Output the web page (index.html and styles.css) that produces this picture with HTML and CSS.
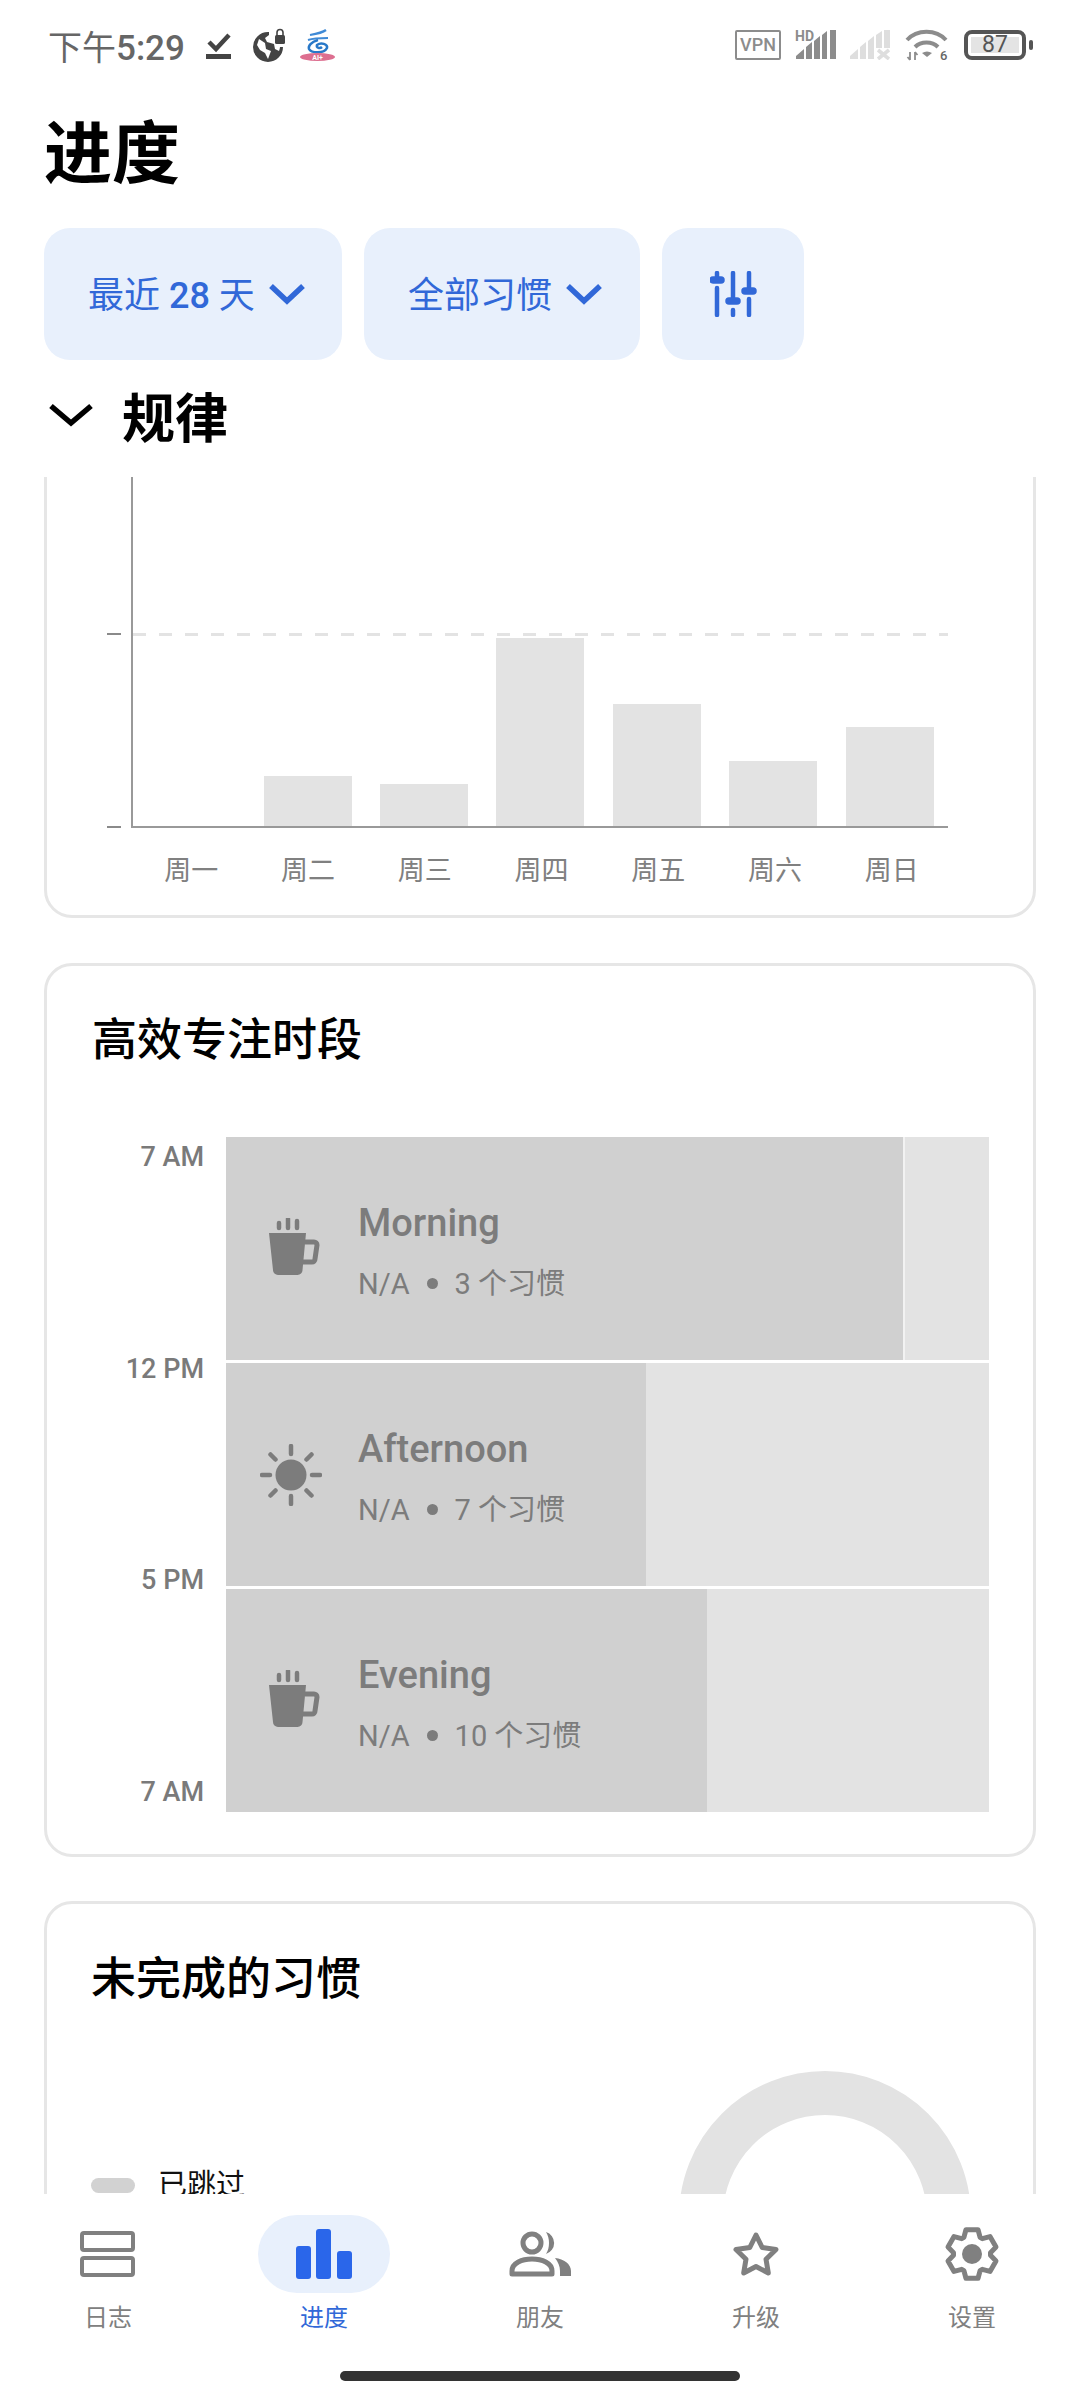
FILE: index.html
```html
<!DOCTYPE html>
<html>
<head>
	<meta charset="utf-8" />
	<title>进度</title>
	<link rel="stylesheet" href="styles.css">
</head>
<body>
<div class="page">
	<div class="statusbar">
		<div class="status-left">
			<span class="clock">下午<b>5:29</b></span>
			<svg class="ic-done" viewBox="0 0 25 32"><path d="M3 13l7 7L23 6" fill="none" stroke="#444" stroke-width="4.5"/><rect x="0" y="25" width="25" height="5" fill="#444"/></svg>
			<svg class="ic-globe" viewBox="0 0 32 34"><path d="M15 4A15 15 0 1 0 30 19h-3a12 12 0 0 1-1 4l-4-2-1-5-7-2-2-4 4-3V4z" fill="#444"/><path d="M6 11l6 4 1 6 5 2-3 8-3-6-5-3-3-5z" fill="#fff"/><rect x="22" y="7" width="10" height="9" rx="1.500" fill="#444"/><path d="M24 8V4.500a3 3 0 0 1 6 0V8" fill="none" stroke="#444" stroke-width="1.600"/></svg>
			<svg class="ic-app" viewBox="0 0 35 32"><path d="M10 6C16 5 22 4 26 1M8 11C14 9 22 9 28 9" fill="none" stroke="#3f8ad6" stroke-width="2.200"/><path d="M18 11C11 13 8 17 9 20C11 24 24 25 27 19C28 15 21 13 17 16C16 19 20 20 22 18" fill="none" stroke="#2878c8" stroke-width="2.500"/><ellipse cx="17.500" cy="28" rx="17.500" ry="4" fill="#dd6f90"/><text x="17.500" y="30.500" class="app-tag">AI+</text></svg>
		</div>
		<div class="status-right">
			<span class="vpn">VPN</span>
			<svg class="ic-hd" viewBox="0 -4 41 38"><text x="0" y="11" class="hd-tag">HD</text><path d="M1 29V26L9 19V29zM11 29V17L17 12V29zM19 29V11L25 6V29zM27 29V5L32 1V29zM35 29V0H41V29z" fill="#8c8c8c"/></svg>
			<svg class="ic-sim" viewBox="0 0 40 30"><path d="M0 29V26L8 19V29zM10 29V17L16 12V29zM18 29V11L24 6V29zM26 18V5L32 1V18zM34 18V0H40V18z" fill="#dedede"/><path d="M28 20L39 29M39 20L28 29" stroke="#dedede" stroke-width="3.600"/></svg>
			<svg class="ic-wifi" viewBox="0 -4 43 40"><path d="M2 11C12 0 31 0 41 11M10 18C16 12 27 12 33 18" fill="none" stroke="#8c8c8c" stroke-width="4"/><path d="M17 24Q22 21 27 24L22 28z" fill="#8c8c8c"/><path d="M5 23V31M2.500 28L5 31M10 23V31M10 23L12.500 26" stroke="#8c8c8c" stroke-width="1.800" fill="none"/><text x="35" y="31" class="wifi-tag">6</text></svg>
			<div class="battery"><span class="level">87</span></div>
		</div>
	</div>

	<h1 class="title">进度</h1>

	<div class="chips">
		<div class="chip chip-range"><span>最近 <b>28</b> 天</span><svg class="chevron" viewBox="0 0 38 22"><path d="M3 3l16 15L35 3" fill="none" stroke="#3168d8" stroke-width="5.500"/></svg></div>
		<div class="chip chip-habits"><span>全部习惯</span><svg class="chevron" viewBox="0 0 38 22"><path d="M3 3l16 15L35 3" fill="none" stroke="#3168d8" stroke-width="5.500"/></svg></div>
		<div class="chip chip-icon">
			<svg viewBox="0 0 47 46" width="47" height="46"><g stroke="#3168d8" stroke-width="4.500" stroke-linecap="round" fill="none"><path d="M7 2V6M7 17V44M23 2V28M23 39V44M39 2V17M39 28V44"/><path d="M3 9H11M19 30H27M35 20H43" stroke-width="7.500"/></g></svg>
		</div>
	</div>

	<div class="section-head">
		<svg class="section-arrow" viewBox="0 0 46 24"><path d="M3 3l20 17L43 3" fill="none" stroke="#000" stroke-width="5.500"/></svg>
		<h2>规律</h2>
	</div>

	<div class="scroller">
		<div class="card card-week">
			<div class="plot">
				<div class="goal"></div>
				<div class="bar-col"><div class="bar" style="height:0"></div></div>
				<div class="bar-col"><div class="bar" style="height:50px"></div></div>
				<div class="bar-col"><div class="bar" style="height:42px"></div></div>
				<div class="bar-col"><div class="bar" style="height:188px"></div></div>
				<div class="bar-col"><div class="bar" style="height:122px"></div></div>
				<div class="bar-col"><div class="bar" style="height:65px"></div></div>
				<div class="bar-col"><div class="bar" style="height:99px"></div></div>
			</div>
			<div class="days">
				<span>周一</span><span>周二</span><span>周三</span><span>周四</span><span>周五</span><span>周六</span><span>周日</span>
			</div>
		</div>

		<div class="card card-focus">
			<h3>高效专注时段</h3>
			<div class="timeline">
				<div class="hours">
					<span>7 AM</span><span>12 PM</span><span>5 PM</span><span>7 AM</span>
				</div>
				<div class="blocks">
					<div class="block">
						<div class="fill fill-edge" style="width:679px">
							<svg class="period-icon" viewBox="0 0 62 62"><use href="#mug"/></svg>
							<div class="period"><div class="period-name">Morning</div><div class="period-sub">N/A<i></i>3 个习惯</div></div>
						</div>
					</div>
					<div class="block">
						<div class="fill" style="width:420px">
							<svg class="period-icon" viewBox="0 0 62 62"><circle cx="31" cy="31" r="15.500" fill="#7c7c7c"/><path d="M31 2v8M31 52v8M2 31h8M52 31h8M10.500 10.500l5 5M46.500 46.500l5 5M51.500 10.500l-5 5M15.500 46.500l-5 5" stroke="#7c7c7c" stroke-width="4.500" stroke-linecap="round"/></svg>
							<div class="period"><div class="period-name">Afternoon</div><div class="period-sub">N/A<i></i>7 个习惯</div></div>
						</div>
					</div>
					<div class="block">
						<div class="fill" style="width:481px">
							<svg class="period-icon" viewBox="0 0 62 62"><use href="#mug"/></svg>
							<div class="period"><div class="period-name">Evening</div><div class="period-sub">N/A<i></i>10 个习惯</div></div>
						</div>
					</div>
				</div>
			</div>
		</div>

		<div class="card card-missed">
			<h3>未完成的习惯</h3>
			<div class="missed-body">
				<div class="legend"><i></i>已跳过</div>
				<div class="donut"></div>
			</div>
		</div>
	</div>

	<div class="tabbar">
		<div class="tab">
			<div class="tab-icon"><svg viewBox="0 0 56 46" width="56" height="46"><rect x="2" y="2" width="51" height="17" rx="2" fill="none" stroke="#808080" stroke-width="4"/><rect x="2" y="27" width="51" height="17" rx="2" fill="none" stroke="#808080" stroke-width="4"/></svg></div>
			<span>日志</span>
		</div>
		<div class="tab tab-on">
			<div class="tab-icon"><svg viewBox="0 0 56 50" width="56" height="50"><rect x="0" y="17" width="15" height="33" rx="3" fill="#2a66ea"/><rect x="20" y="0" width="15" height="50" rx="3" fill="#2a66ea"/><rect x="41" y="22" width="15" height="28" rx="3" fill="#2a66ea"/></svg></div>
			<span>进度</span>
		</div>
		<div class="tab">
			<div class="tab-icon"><svg viewBox="0 0 62 46" width="62" height="46"><circle cx="23" cy="12" r="9" fill="none" stroke="#808080" stroke-width="5"/><path d="M3 43v-3c0-8 10-12 20-12s20 4 20 12v3z" fill="none" stroke="#808080" stroke-width="5" stroke-linejoin="round"/><path d="M37 1a11.500 11.500 0 0 1 0 22c4-6 4-16 0-22zM46 27c9 1 16 6 16 13v5H51v-5c0-5-2-9-5-13z" fill="#808080"/></svg></div>
			<span>朋友</span>
		</div>
		<div class="tab">
			<div class="tab-icon"><svg viewBox="0 0 48 46" width="48" height="46"><polygon points="24,4 30.200,16.500 44,18.500 34,28.200 36.300,42 24,35.500 11.700,42 14,28.200 4,18.500 17.800,16.500" fill="none" stroke="#808080" stroke-width="5" stroke-linejoin="round"/></svg></div>
			<span>升级</span>
		</div>
		<div class="tab">
			<div class="tab-icon"><svg viewBox="0 0 56 56" width="56" height="56"><polygon points="19.900,11.400 21.950,3.750 34.050,3.750 36.100,11.400 38.300,12.700 46,10.600 52,21.100 46.500,26.700 46.500,29.300 52,34.900 46,45.400 38.300,43.300 36.100,44.600 34.050,52.250 21.950,52.250 19.900,44.600 17.700,43.300 10,45.400 4,34.900 9.500,29.300 9.500,26.700 4,21.100 10,10.600 17.700,12.700" fill="none" stroke="#808080" stroke-width="5" stroke-linejoin="round"/><circle cx="28" cy="28" r="10" fill="#808080"/></svg></div>
			<span>设置</span>
		</div>
	</div>
	<div class="home-row"><div class="home-bar"></div></div>
</div>

<svg class="defs" width="0" height="0">
	<symbol id="mug" viewBox="0 0 62 62">
		<path d="M9 15h37l-3.500 37a5 5 0 0 1-5 5H18a5 5 0 0 1-5-5z" fill="#7c7c7c"/>
		<path d="M45 24h9a3 3 0 0 1 3 3l-2 14a3 3 0 0 1-3 3h-9" fill="none" stroke="#7c7c7c" stroke-width="5"/>
		<path d="M19 5v5M28 1v9M37 3v7" stroke="#7c7c7c" stroke-width="4.500" stroke-linecap="round"/>
	</symbol>
</svg>
</body>
</html>
```

FILE: styles.css
```css
html,body{
    margin:0;
    padding:0;
    background:#fff;
}
body{
    font-family:Roboto,"Noto Sans CJK SC",sans-serif;
}
.page{
    width:1080px;
    height:2400px;
    display:flex;
    flex-direction:column;
    overflow:hidden;
}
.defs{
    display:none;
}

/* status bar */
.statusbar{
    height:90px;
    flex:none;
    display:flex;
    justify-content:space-between;
    align-items:center;
    padding:0 44px 0 48px;
}
.status-left,.status-right{
    display:flex;
    align-items:center;
}
.clock{
    font-size:34px;
    color:#666;
    width:135px;
    margin-right:23px;
    white-space:nowrap;
}
.clock b{
    font-weight:500;
    font-size:35px;
}
.ic-done{
    width:25px;
    height:32px;
    margin-right:22px;
}
.ic-globe{
    width:32px;
    height:34px;
    margin-right:15px;
}
.ic-app{
    width:35px;
    height:32px;
}
.app-tag{
    font:700 7px Roboto,sans-serif;
    fill:#fff;
    text-anchor:middle;
}
.vpn{
    width:46px;
    height:30px;
    box-sizing:border-box;
    border:2.500px solid #8c8c8c;
    border-radius:2px;
    font-size:18px;
    font-weight:500;
    line-height:25px;
    text-align:center;
    color:#8c8c8c;
    margin-right:14px;
}
.ic-hd{
    width:41px;
    height:38px;
    margin-right:14px;
}
.hd-tag{
    font:700 14px Roboto,sans-serif;
    fill:#8c8c8c;
}
.ic-sim{
    width:40px;
    height:30px;
    margin-right:15px;
}
.ic-wifi{
    width:43px;
    height:40px;
    margin-right:16px;
}
.wifi-tag{
    font:500 13px Roboto,sans-serif;
    fill:#666;
}
.battery{
    position:relative;
    width:62px;
    height:30px;
    box-sizing:border-box;
    border:4px solid #555;
    border-radius:8px;
    padding:3px;
    margin-right:10px;
    display:flex;
}
.battery::after{
    content:"";
    position:absolute;
    right:-11px;
    top:6px;
    width:4px;
    height:10px;
    border-radius:2px;
    background:#555;
}
.level{
    flex:1;
    background:#e4e4e4;
    font-size:23px;
    line-height:16px;
    text-align:center;
    color:#555;
}

/* header */
.title{
    margin:0;
    height:138px;
    flex:none;
    box-sizing:border-box;
    padding-left:44px;
    font-size:68px;
    font-weight:700;
    line-height:130px;
    color:#000;
}
.chips{
    display:flex;
    gap:22px;
    padding-left:44px;
    flex:none;
}
.chip{
    height:132px;
    box-sizing:border-box;
    padding:0 0 0 44px;
    border-radius:26px;
    background:#e8f0fc;
    color:#3168d8;
    font-size:36px;
    display:flex;
    align-items:center;
    gap:13px;
}
.chip span{
    padding-bottom:4px;
}
.chip b{
    font-weight:500;
}
.chip-range{
    width:298px;
}
.chip-habits{
    width:276px;
}
.chip-icon{
    width:142px;
    padding:0;
    justify-content:center;
}
.chevron{
    width:38px;
    height:22px;
}
.section-head{
    height:117px;
    flex:none;
    box-sizing:border-box;
    padding:0 0 8px 48px;
    display:flex;
    align-items:center;
    gap:28px;
}
.section-arrow{
    width:46px;
    height:24px;
}
.section-head h2{
    margin:0;
    font-size:53px;
    font-weight:700;
    color:#000;
}

/* cards */
.scroller{
    flex:1;
    min-height:0;
    overflow:hidden;
    padding:0 44px;
}
.card{
    box-sizing:border-box;
    border:3px solid #e6e6e6;
    border-radius:28px;
    background:#fff;
    margin-bottom:45px;
}
.card h3{
    margin:0;
    font-size:45px;
    font-weight:500;
    color:#000;
    line-height:60px;
}
.card-week{
    height:501px;
    margin-top:-60px;
    padding:57px 0 0 84px;
}
.plot{
    position:relative;
    width:815px;
    height:349px;
    border-left:2px solid #999;
    border-bottom:2px solid #999;
    display:grid;
    grid-template-columns:repeat(7,1fr);
    align-items:end;
}
.goal{
    position:absolute;
    left:0;
    right:0;
    top:156px;
    height:3px;
    background:repeating-linear-gradient(90deg,#e3e3e3 0 13px,transparent 13px 26px);
}
/* little ticks left of the axis */
.goal::before,.plot::after{
    content:"";
    position:absolute;
    left:-26px;
    width:14px;
    height:2px;
    background:#8a8a8a;
}
.plot::after{
    bottom:-2px;
}
.bar-col{
    display:flex;
    justify-content:center;
}
.bar{
    width:88px;
    background:#e3e3e3;
}
.days{
    width:817px;
    margin-left:2px;
    display:grid;
    grid-template-columns:repeat(7,1fr);
    text-align:center;
    font-size:27px;
    line-height:40px;
    color:#808080;
    padding-top:23px;
}
.card-focus{
    height:894px;
    margin-bottom:44px;
    padding:45px 44px 0 45px;
}
.timeline{
    display:flex;
    margin-top:66px;
    gap:22px;
}
.hours{
    width:112px;
    height:675px;
    box-sizing:border-box;
    padding:4px 0;
    display:flex;
    flex-direction:column;
    justify-content:space-between;
    align-items:flex-end;
    font-size:27px;
    font-weight:500;
    line-height:32px;
    color:#7a7a7a;
}
.blocks{
    flex:1;
    display:flex;
    flex-direction:column;
    gap:3px;
}
.block{
    height:223px;
    background:#e3e3e3;
    display:flex;
}
.fill{
    background:#d0d0d0;
    box-sizing:border-box;
    display:flex;
    align-items:center;
    padding-left:34px;
}
.fill-edge{
    border-right:2px solid #f2f2f2;
}
.period-icon{
    width:62px;
    height:62px;
    flex:none;
    margin-right:36px;
}
.period{
    padding-top:4px;
}
.period-name{
    font-size:38px;
    font-weight:500;
    color:#7c7c7c;
    line-height:50px;
}
.period-sub{
    display:flex;
    align-items:center;
    font-size:29px;
    line-height:40px;
    color:#7c7c7c;
    margin-top:16px;
    white-space:nowrap;
}
.period-sub i{
    width:11px;
    height:11px;
    border-radius:50%;
    background:#7c7c7c;
    margin:0 17px;
}
.card-missed{
    padding:46px 62px 0 44px;
    height:640px;
}
.missed-body{
    display:flex;
    justify-content:space-between;
    align-items:flex-start;
    margin-top:61px;
}
.legend{
    display:flex;
    align-items:center;
    gap:23px;
    font-size:29px;
    line-height:40px;
    color:#111;
    margin-top:94px;
}
.legend i{
    width:44px;
    height:15px;
    border-radius:8px;
    background:#d2d2d2;
}
.donut{
    width:292px;
    height:292px;
    box-sizing:border-box;
    border:44px solid #e3e3e3;
    border-radius:50%;
}

/* bottom tabs */
.tabbar{
    height:160px;
    flex:none;
    display:grid;
    grid-template-columns:repeat(5,216px);
    background:#fff;
}
.tab{
    display:flex;
    flex-direction:column;
    align-items:center;
    font-size:24px;
    color:#808080;
}
.tab-icon{
    width:132px;
    height:78px;
    margin-top:21px;
    border-radius:39px;
    display:flex;
    align-items:center;
    justify-content:center;
}
.tab span{
    line-height:34px;
    margin-top:8px;
}
.tab-on .tab-icon{
    background:#e8f0fc;
}
.tab-on{
    color:#3168d8;
}
.home-row{
    height:46px;
    flex:none;
    display:flex;
    justify-content:center;
}
.home-bar{
    width:400px;
    height:10px;
    border-radius:5px;
    background:#333;
    margin-top:17px;
}
```
